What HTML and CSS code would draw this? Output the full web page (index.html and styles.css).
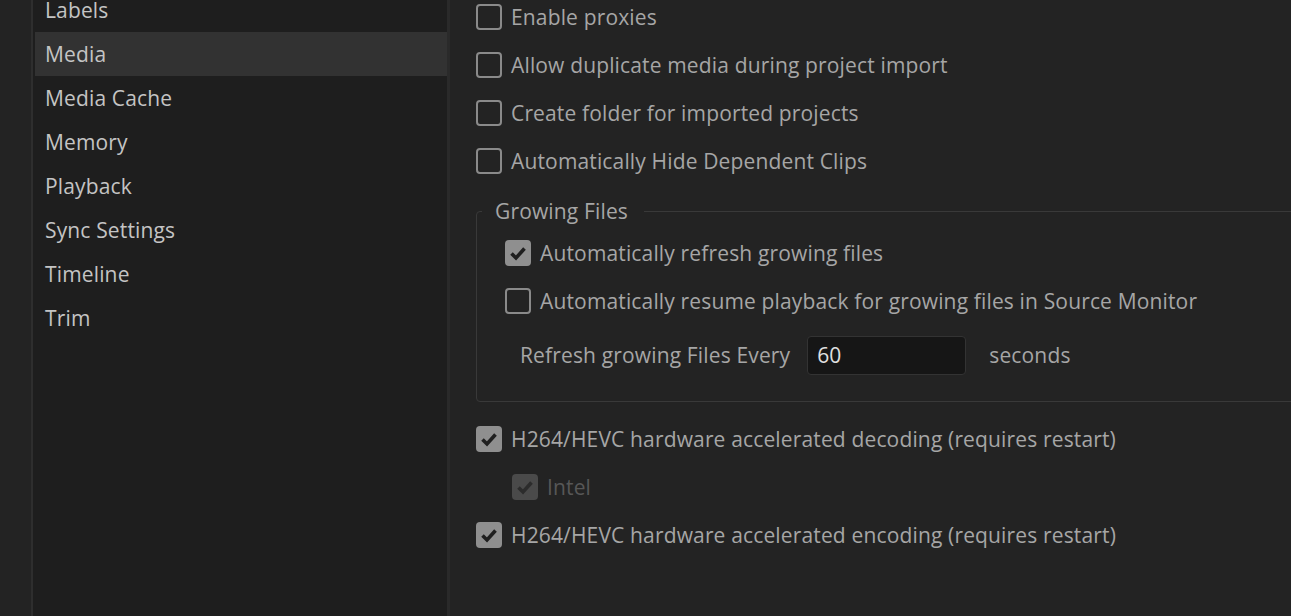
FILE: index.html
```html
<!DOCTYPE html>
<html lang="en">
<head>
    <meta charset="UTF-8">
    <title>Preferences - Media</title>
    <link rel="stylesheet" href="styles.css">
</head>
<body>
    <div class="rail"></div>
    <nav class="nav">
        <div class="nav-item">Labels</div>
        <div class="nav-item selected">Media</div>
        <div class="nav-item">Media Cache</div>
        <div class="nav-item">Memory</div>
        <div class="nav-item">Playback</div>
        <div class="nav-item">Sync Settings</div>
        <div class="nav-item">Timeline</div>
        <div class="nav-item">Trim</div>
    </nav>
    <main class="content">
        <label class="row"><span class="box"></span>Enable proxies</label>
        <label class="row"><span class="box"></span>Allow duplicate media during project import</label>
        <label class="row"><span class="box"></span>Create folder for imported projects</label>
        <label class="row"><span class="box"></span>Automatically Hide Dependent Clips</label>

        <fieldset class="group">
            <legend>Growing Files</legend>
            <div class="group-body">
                <label class="row"><span class="box checked"><svg viewBox="0 0 26 26"><path d="M6.5 13.5 L11 18 L19.5 8.5"/></svg></span>Automatically refresh growing files</label>
                <label class="row"><span class="box"></span>Automatically resume playback for growing files in Source Monitor</label>
                <div class="row refresh">
                    <span>Refresh growing Files Every</span>
                    <input class="num" type="text" value="60">
                    <span class="unit">seconds</span>
                </div>
            </div>
        </fieldset>

        <label class="row after-group"><span class="box checked"><svg viewBox="0 0 26 26"><path d="M6.5 13.5 L11 18 L19.5 8.5"/></svg></span>H264/HEVC hardware accelerated decoding (requires restart)</label>
        <label class="row sub disabled"><span class="box checked"><svg viewBox="0 0 26 26"><path d="M6.5 13.5 L11 18 L19.5 8.5"/></svg></span>Intel</label>
        <label class="row"><span class="box checked"><svg viewBox="0 0 26 26"><path d="M6.5 13.5 L11 18 L19.5 8.5"/></svg></span>H264/HEVC hardware accelerated encoding (requires restart)</label>
    </main>
</body>
</html>
```

FILE: styles.css
```css
body {
    margin: 0;
    height: 616px;
    overflow: hidden;
    display: flex;
    background-color: #232323;
    font-family: 'Open Sans', 'Noto Sans', sans-serif;
    font-size: 21px;
    letter-spacing: 0.15px;
}

.rail {
    width: 31px;
    flex-shrink: 0;
    border-right: 2px solid #2e2e2e;
}

.nav {
    width: 412px;
    flex-shrink: 0;
    padding: 0 0 0 2px;
    margin-top: -12px;
    background-color: #1e1e1e;
    border-right: 3px solid #2a2a2a;
}

.nav-item {
    height: 44px;
    line-height: 44px;
    padding-left: 10px;
    color: #c4c4c4;
}

.nav-item.selected {
    background-color: #323232;
}

.content {
    flex: 1;
    margin-top: -7px;
    padding-left: 26px;
    color: #a6a6a6;
    min-width: 0;
}

.row {
    display: flex;
    align-items: center;
    height: 48px;
    white-space: nowrap;
}

.box {
    width: 26px;
    height: 26px;
    box-sizing: border-box;
    border: 2.5px solid #8a8a8a;
    border-radius: 4px;
    margin-right: 9px;
    flex-shrink: 0;
}

.box.checked {
    background-color: #8f8f8f;
    border: none;
}

.box svg {
    display: block;
    width: 26px;
    height: 26px;
}

.box path {
    fill: none;
    stroke: #1f1f1f;
    stroke-width: 3.6;
}

.group {
    margin: 12px -30px 0 0;
    padding: 4px 0 22px 5px;
    border: 1px solid #393939;
    border-radius: 4px;
}

.group legend {
    padding: 0 16px 0 13px;
    line-height: 28px;
    color: #a6a6a6;
}

.group-body {
    padding-left: 23px;
}

.refresh {
    margin-top: 6px;
    padding-left: 15px;
}

.num {
    width: 159px;
    height: 39px;
    box-sizing: border-box;
    margin-left: 17px;
    padding: 0 9px;
    background-color: #161616;
    border: 1px solid #333;
    border-radius: 4px;
    color: #e0e0e0;
    font-family: inherit;
    font-size: 21px;
}

.unit {
    margin-left: 23px;
}

.after-group {
    margin-top: 13px;
}

.sub {
    padding-left: 36px;
}

.disabled {
    color: #575757;
}

.disabled .box.checked {
    background-color: #4a4a4a;
}

.disabled .box path {
    stroke: #2c2c2c;
}
```
